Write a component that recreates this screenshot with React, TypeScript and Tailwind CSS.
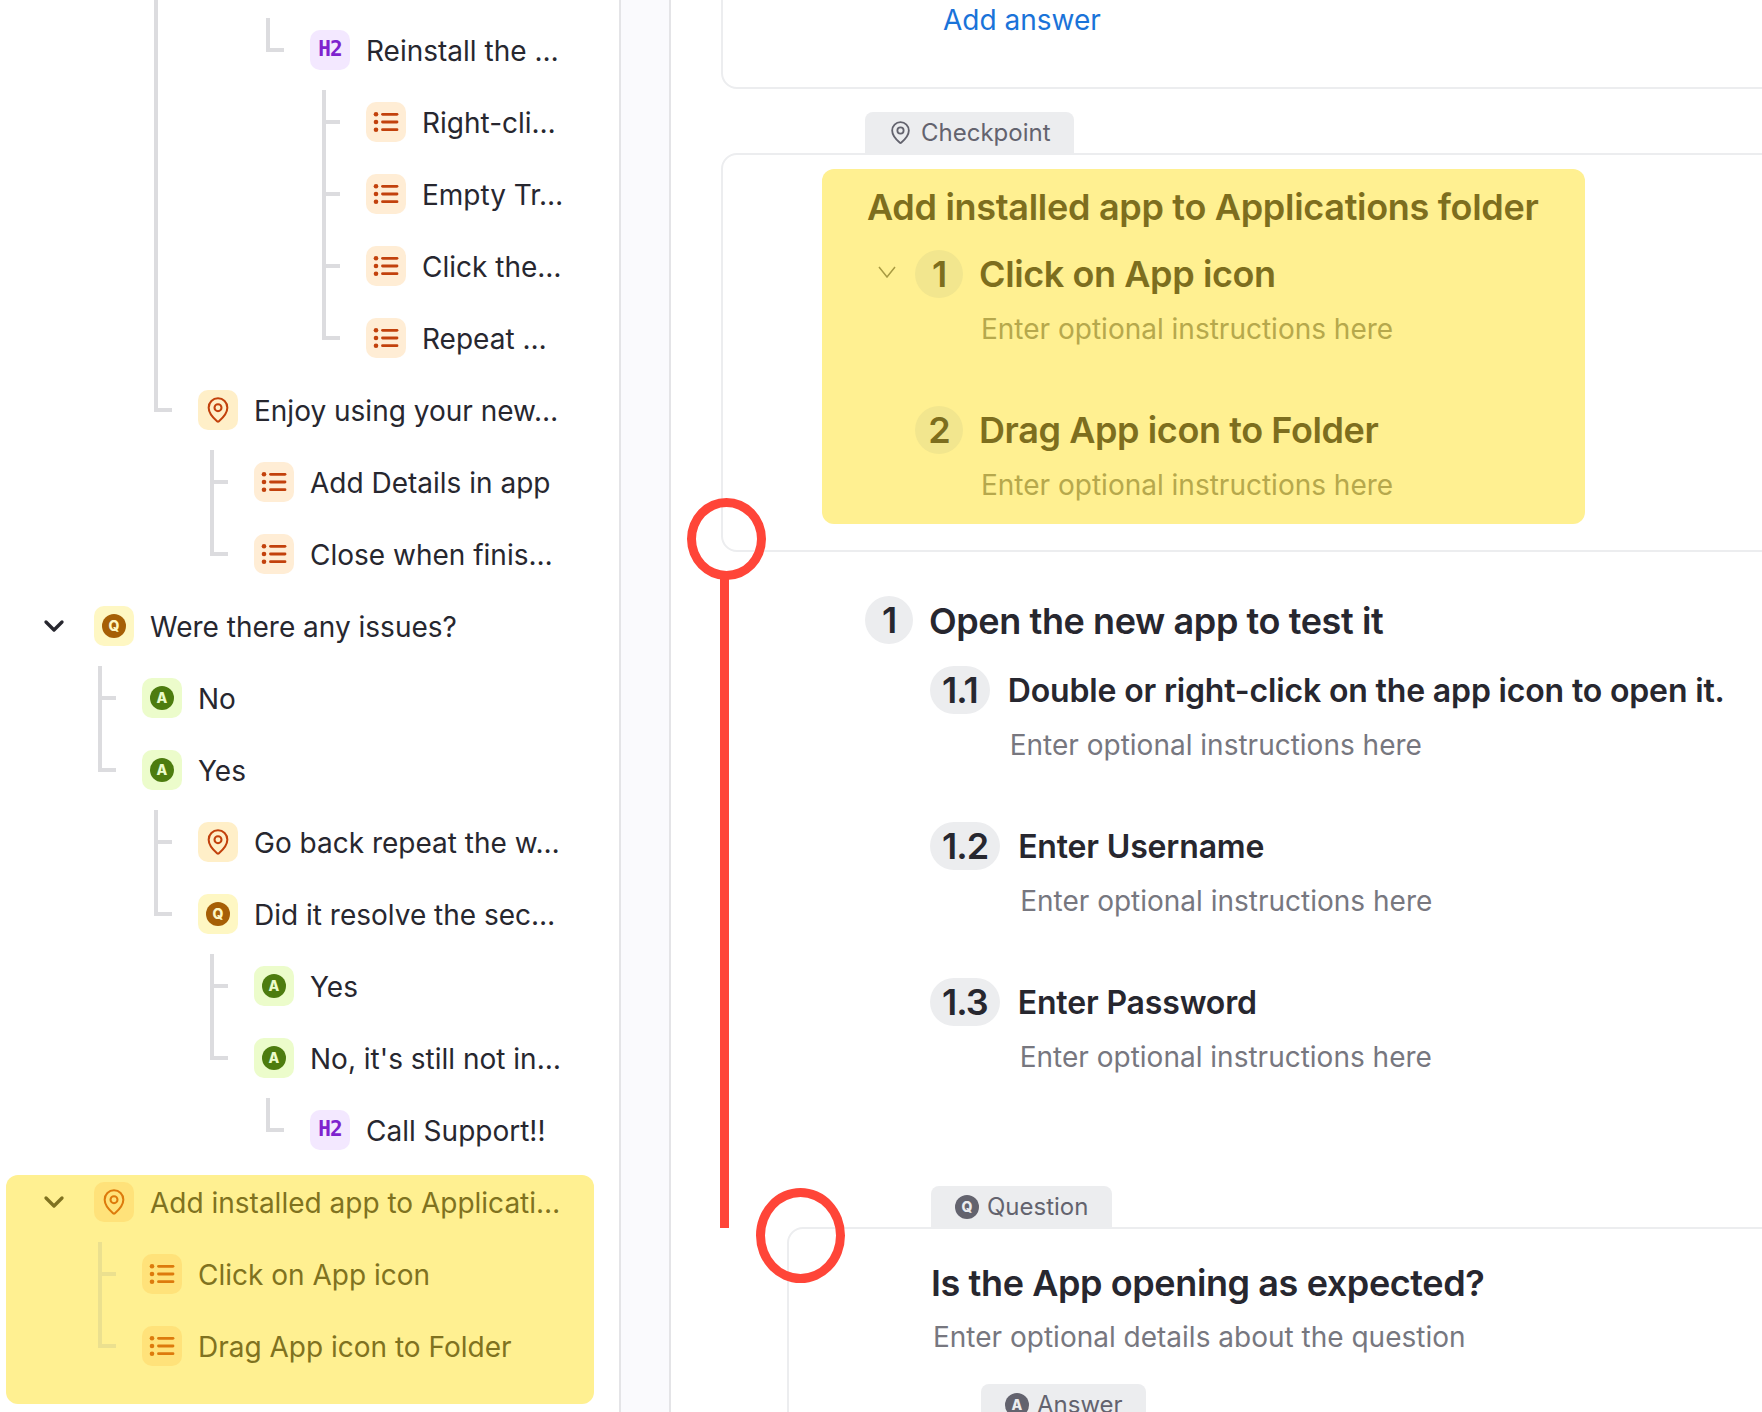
import { ChevronDown, MapPin } from 'lucide-react';

type Kind = 'h2' | 'list' | 'pin' | 'q' | 'a' | null;

interface TreeNode {
  kind: Kind;
  text: string;
  open?: boolean;
  children?: TreeNode[];
}

const ROW = 72;

const reinstall: TreeNode = {
  kind: 'h2',
  text: 'Reinstall the …',
  children: [
    { kind: 'list', text: 'Right-cli…' },
    { kind: 'list', text: 'Empty Tr…' },
    { kind: 'list', text: 'Click the…' },
    { kind: 'list', text: 'Repeat …' },
  ],
};

// the rows above these two are scrolled out of the picture
const scrolled: TreeNode[] = [
  { kind: null, text: '', children: [{ kind: null, text: '', children: [reinstall] }] },
  {
    kind: 'pin',
    text: 'Enjoy using your new…',
    children: [
      { kind: 'list', text: 'Add Details in app' },
      { kind: 'list', text: 'Close when finis…' },
    ],
  },
];

const issues: TreeNode = {
  kind: 'q',
  text: 'Were there any issues?',
  open: true,
  children: [
    { kind: 'a', text: 'No' },
    {
      kind: 'a',
      text: 'Yes',
      children: [
        { kind: 'pin', text: 'Go back repeat the w…' },
        {
          kind: 'q',
          text: 'Did it resolve the sec…',
          children: [
            { kind: 'a', text: 'Yes' },
            {
              kind: 'a',
              text: "No, it's still not in…",
              children: [{ kind: 'h2', text: 'Call Support!!' }],
            },
          ],
        },
      ],
    },
  ],
};

const installed: TreeNode = {
  kind: 'pin',
  text: 'Add installed app to Applicati…',
  open: true,
  children: [
    { kind: 'list', text: 'Click on App icon' },
    { kind: 'list', text: 'Drag App icon to Folder' },
  ],
};

function countRows(node: TreeNode): number {
  return 1 + (node.children ?? []).reduce((sum, child) => sum + countRows(child), 0);
}

function ListGlyph({ selected }: { selected: boolean }) {
  return (
    <svg
      width="40"
      height="40"
      viewBox="0 0 40 40"
      className={selected ? 'text-[#dd7a0c]' : 'text-[#c2410c]'}
    >
      <g fill="currentColor">
        <circle cx="10" cy="12.3" r="2.3" />
        <circle cx="10" cy="20" r="2.3" />
        <circle cx="10" cy="27.7" r="2.3" />
      </g>
      <g stroke="currentColor" strokeWidth="2.8" strokeLinecap="round">
        <line x1="16.5" y1="12.3" x2="31" y2="12.3" />
        <line x1="16.5" y1="20" x2="31" y2="20" />
        <line x1="16.5" y1="27.7" x2="31" y2="27.7" />
      </g>
    </svg>
  );
}

function LetterDot({ letter, className }: { letter: string; className: string }) {
  return (
    <span
      className={`flex h-6 w-6 items-center justify-center rounded-full text-[14px] font-extrabold leading-none ${className}`}
    >
      {letter}
    </span>
  );
}

function Badge({ kind, selected }: { kind: Exclude<Kind, null>; selected: boolean }) {
  if (kind === 'h2') {
    return (
      <span className="flex h-10 w-10 items-center justify-center rounded-[10px] bg-[#f3e8ff] font-['DejaVu_Sans_Mono',monospace] text-[21px] font-bold tracking-[-1px] text-[#7e22ce]">
        H2
      </span>
    );
  }
  if (kind === 'list') {
    return (
      <span
        className={`flex h-10 w-10 items-center justify-center rounded-[10px] ${selected ? 'bg-[#ffe27a]' : 'bg-[#ffedd5]'}`}
      >
        <ListGlyph selected={selected} />
      </span>
    );
  }
  if (kind === 'pin') {
    return (
      <span
        className={`flex h-10 w-10 items-center justify-center rounded-[10px] ${selected ? 'bg-[#ffe27a]' : 'bg-[#ffefc8]'}`}
      >
        <MapPin
          size={28}
          strokeWidth={1.75}
          className={selected ? 'text-[#dd7a0c]' : 'text-[#c2410c]'}
        />
      </span>
    );
  }
  if (kind === 'q') {
    return (
      <span className="flex h-10 w-10 items-center justify-center rounded-[10px] bg-[#fef7c3]">
        <LetterDot letter="Q" className="bg-[#a65f06] text-[#fef7c3]" />
      </span>
    );
  }
  return (
    <span className="flex h-10 w-10 items-center justify-center rounded-[10px] bg-[#ecfccb]">
      <LetterDot letter="A" className="bg-[#4d7c0f] text-[#ecfccb]" />
    </span>
  );
}

function Row({
  node,
  tick,
  selected,
}: {
  node: TreeNode;
  tick: boolean;
  selected: boolean;
}) {
  const line = selected ? 'bg-[#ebe08f]' : 'bg-[#dcdcdf]';
  return (
    <div className="flex h-[72px] items-center">
      {node.open && (
        <ChevronDown
          size={32}
          strokeWidth={2.5}
          className={`-ml-[56px] mr-[24px] shrink-0 ${selected ? 'text-[#7f7220]' : 'text-[#27272f]'}`}
        />
      )}
      {node.kind && (
        <div className="relative shrink-0">
          {tick && <span className={`absolute -left-[44px] top-[18px] h-1 w-[18px] ${line}`} />}
          <Badge kind={node.kind} selected={selected} />
        </div>
      )}
      {node.kind && (
        <span
          className={`ml-4 mt-0.5 whitespace-nowrap text-[28px] leading-[34px] ${selected ? 'text-[#7f7220]' : 'text-[#27272f]'}`}
        >
          {node.text}
        </span>
      )}
    </div>
  );
}

function Branch({
  node,
  level,
  selected,
}: {
  node: TreeNode;
  level: number;
  selected: boolean;
}) {
  return (
    <>
      <Row node={node} tick={level > 0} selected={selected} />
      {node.children && <Group nodes={node.children} level={level + 1} selected={selected} />}
    </>
  );
}

function Group({
  nodes,
  level,
  selected = false,
}: {
  nodes: TreeNode[];
  level: number;
  selected?: boolean;
}) {
  const before = nodes.slice(0, -1).reduce((sum, node) => sum + countRows(node), 0);
  return (
    <div className={`relative ${level === 1 ? 'pl-[48px]' : 'pl-[56px]'}`}>
      <span
        className={`absolute top-1 w-1 ${level === 1 ? 'left-1' : 'left-3'} ${selected ? 'bg-[#ebe08f]' : 'bg-[#dcdcdf]'}`}
        style={{ height: before * ROW + 34 }}
      />
      {nodes.map((node, i) => (
        <Branch key={i} node={node} level={level} selected={selected} />
      ))}
    </div>
  );
}

function Sidebar() {
  return (
    <aside className="h-full w-[621px] shrink-0 overflow-hidden border-r-2 border-[#e4e4e7] bg-white pl-[94px]">
      <div className="-mt-[130px]">
        <div className="pl-[48px]">
          <Group nodes={scrolled} level={2} />
        </div>
        <Branch node={issues} level={0} selected={false} />
        <div className="-ml-[88px] mt-[9px] flow-root w-[588px] rounded-xl bg-[#fff091] pb-[22px] pl-[88px]">
          <div className="-mt-[9px]">
            <Branch node={installed} level={0} selected />
          </div>
        </div>
      </div>
    </aside>
  );
}

function Tab({
  icon,
  label,
  className,
}: {
  icon: React.ReactNode;
  label: string;
  className: string;
}) {
  return (
    <div
      className={`flex h-[41px] items-center gap-2 rounded-t-lg bg-[#ecedef] text-[24px] leading-none text-[#63636e] ${className}`}
    >
      {icon}
      <span>{label}</span>
    </div>
  );
}

function StepChip({ label, tone }: { label: string; tone: 'yellow' | 'gray' }) {
  return (
    <span
      className={`flex h-12 min-w-12 shrink-0 items-center justify-center rounded-full px-3 text-[36px] font-semibold leading-none tracking-[-1px] ${tone === 'yellow' ? 'bg-[#f2e68e] text-[#7d6e1e]' : 'bg-[#ecedef] text-[#27272f]'}`}
    >
      {label}
    </span>
  );
}

function YellowStep({ number, title, chevron }: { number: string; title: string; chevron?: boolean }) {
  return (
    <div className="flex h-[156px] items-start">
      {chevron && (
        <svg
          width="18"
          height="12"
          viewBox="0 0 18 12"
          fill="none"
          className="-ml-[37px] mr-[19px] mt-4 shrink-0 text-[#a89a42]"
        >
          <polyline points="1,1 9,11 17,1" stroke="currentColor" strokeWidth="1.5" />
        </svg>
      )}
      <StepChip label={number} tone="yellow" />
      <div className="ml-4">
        <div className="flex h-12 items-center text-[36px] font-semibold leading-none tracking-[-0.4px] text-[#7d6e1e]">
          {title}
        </div>
        <p className="ml-0.5 mt-[14px] text-[28px] leading-[34px] text-[#b6a84c]">
          Enter optional instructions here
        </p>
      </div>
    </div>
  );
}

function SubStep({ number, title }: { number: string; title: string }) {
  return (
    <div className="flex h-[156px] items-start">
      <StepChip label={number} tone="gray" />
      <div className="ml-[18px]">
        <div className="flex h-12 items-center whitespace-nowrap pt-0.5 text-[32px] font-semibold leading-none tracking-[-0.16px] text-[#27272f]">
          {title}
        </div>
        <p className="ml-0.5 mt-[14px] text-[28px] leading-[34px] text-[#77777f]">
          Enter optional instructions here
        </p>
      </div>
    </div>
  );
}

function Editor() {
  return (
    <main className="h-full min-w-0 flex-1 overflow-hidden bg-white pl-[50px]">
      <div className="-mr-10 -mt-10 h-[129px] rounded-2xl border-2 border-[#ecedef] pl-[220px] pt-[41px] text-[28px] leading-[34px] text-[#1a73d9]">
        Add answer
      </div>

      <Tab
        className="ml-[144px] mt-[23px] w-[209px] pl-[23px]"
        icon={<MapPin size={25} strokeWidth={1.75} className="text-[#63636e]" />}
        label="Checkpoint"
      />
      <div className="-mr-10 h-[399px] rounded-2xl border-2 border-[#ecedef] pl-[99px] pt-[14px]">
        <div className="h-[355px] w-[763px] rounded-xl bg-[#fff091] pt-4">
          <h2 className="pl-[45px] text-[36px] font-semibold leading-[44px] tracking-[-0.3px] text-[#7d6e1e]">
            Add installed app to Applications folder
          </h2>
          <div className="ml-[93px] mt-[21px]">
            <YellowStep chevron number="1" title="Click on App icon" />
            <YellowStep number="2" title="Drag App icon to Folder" />
          </div>
        </div>
      </div>

      <section className="ml-[144px] mt-[44px]">
        <div className="flex items-center gap-4">
          <StepChip label="1" tone="gray" />
          <h2 className="pt-0.5 text-[36px] font-semibold leading-none tracking-[-0.4px] text-[#27272f]">
            Open the new app to test it
          </h2>
        </div>
        <div className="ml-[65px] mt-[22px]">
          <SubStep number="1.1" title="Double or right-click on the app icon to open it." />
          <SubStep number="1.2" title="Enter Username" />
          <SubStep number="1.3" title="Enter Password" />
        </div>
      </section>

      <Tab
        className="ml-[210px] mt-[52px] w-[181px] pl-6"
        icon={<LetterDot letter="Q" className="bg-[#63636e] text-[#ecedef]" />}
        label="Question"
      />
      <div className="-mr-10 ml-[66px] h-[300px] rounded-2xl border-2 border-[#ecedef] pl-[142px] pt-[32px]">
        <h2 className="text-[36px] font-semibold leading-[44px] tracking-[-0.4px] text-[#27272f]">
          Is the App opening as expected?
        </h2>
        <p className="ml-0.5 mt-[15px] text-[28px] leading-[34px] text-[#77777f]">
          Enter optional details about the question
        </p>
        <Tab
          className="ml-[50px] mt-[30px] w-[165px] pl-6"
          icon={<LetterDot letter="A" className="bg-[#63636e] text-[#ecedef]" />}
          label="Answer"
        />
      </div>
    </main>
  );
}

export default function App() {
  return (
    <div className="relative flex h-[1412px] w-full overflow-hidden bg-white font-['Inter',sans-serif]">
      <Sidebar />
      <div className="h-full w-[50px] shrink-0 border-r-2 border-[#e4e4e7] bg-[#fafafd]" />
      <Editor />

      {/* red markup drawn on top of the screenshot */}
      <div className="absolute left-[720px] top-[572px] h-[656px] w-[9px] bg-[#ff4538]" />
      <div className="absolute left-[687px] top-[498px] h-[82px] w-[79px] rounded-[50%] border-[9px] border-[#ff4538]" />
      <div className="absolute left-[756px] top-[1188px] h-[95px] w-[89px] rounded-[50%] border-[9px] border-[#ff4538]" />
    </div>
  );
}
